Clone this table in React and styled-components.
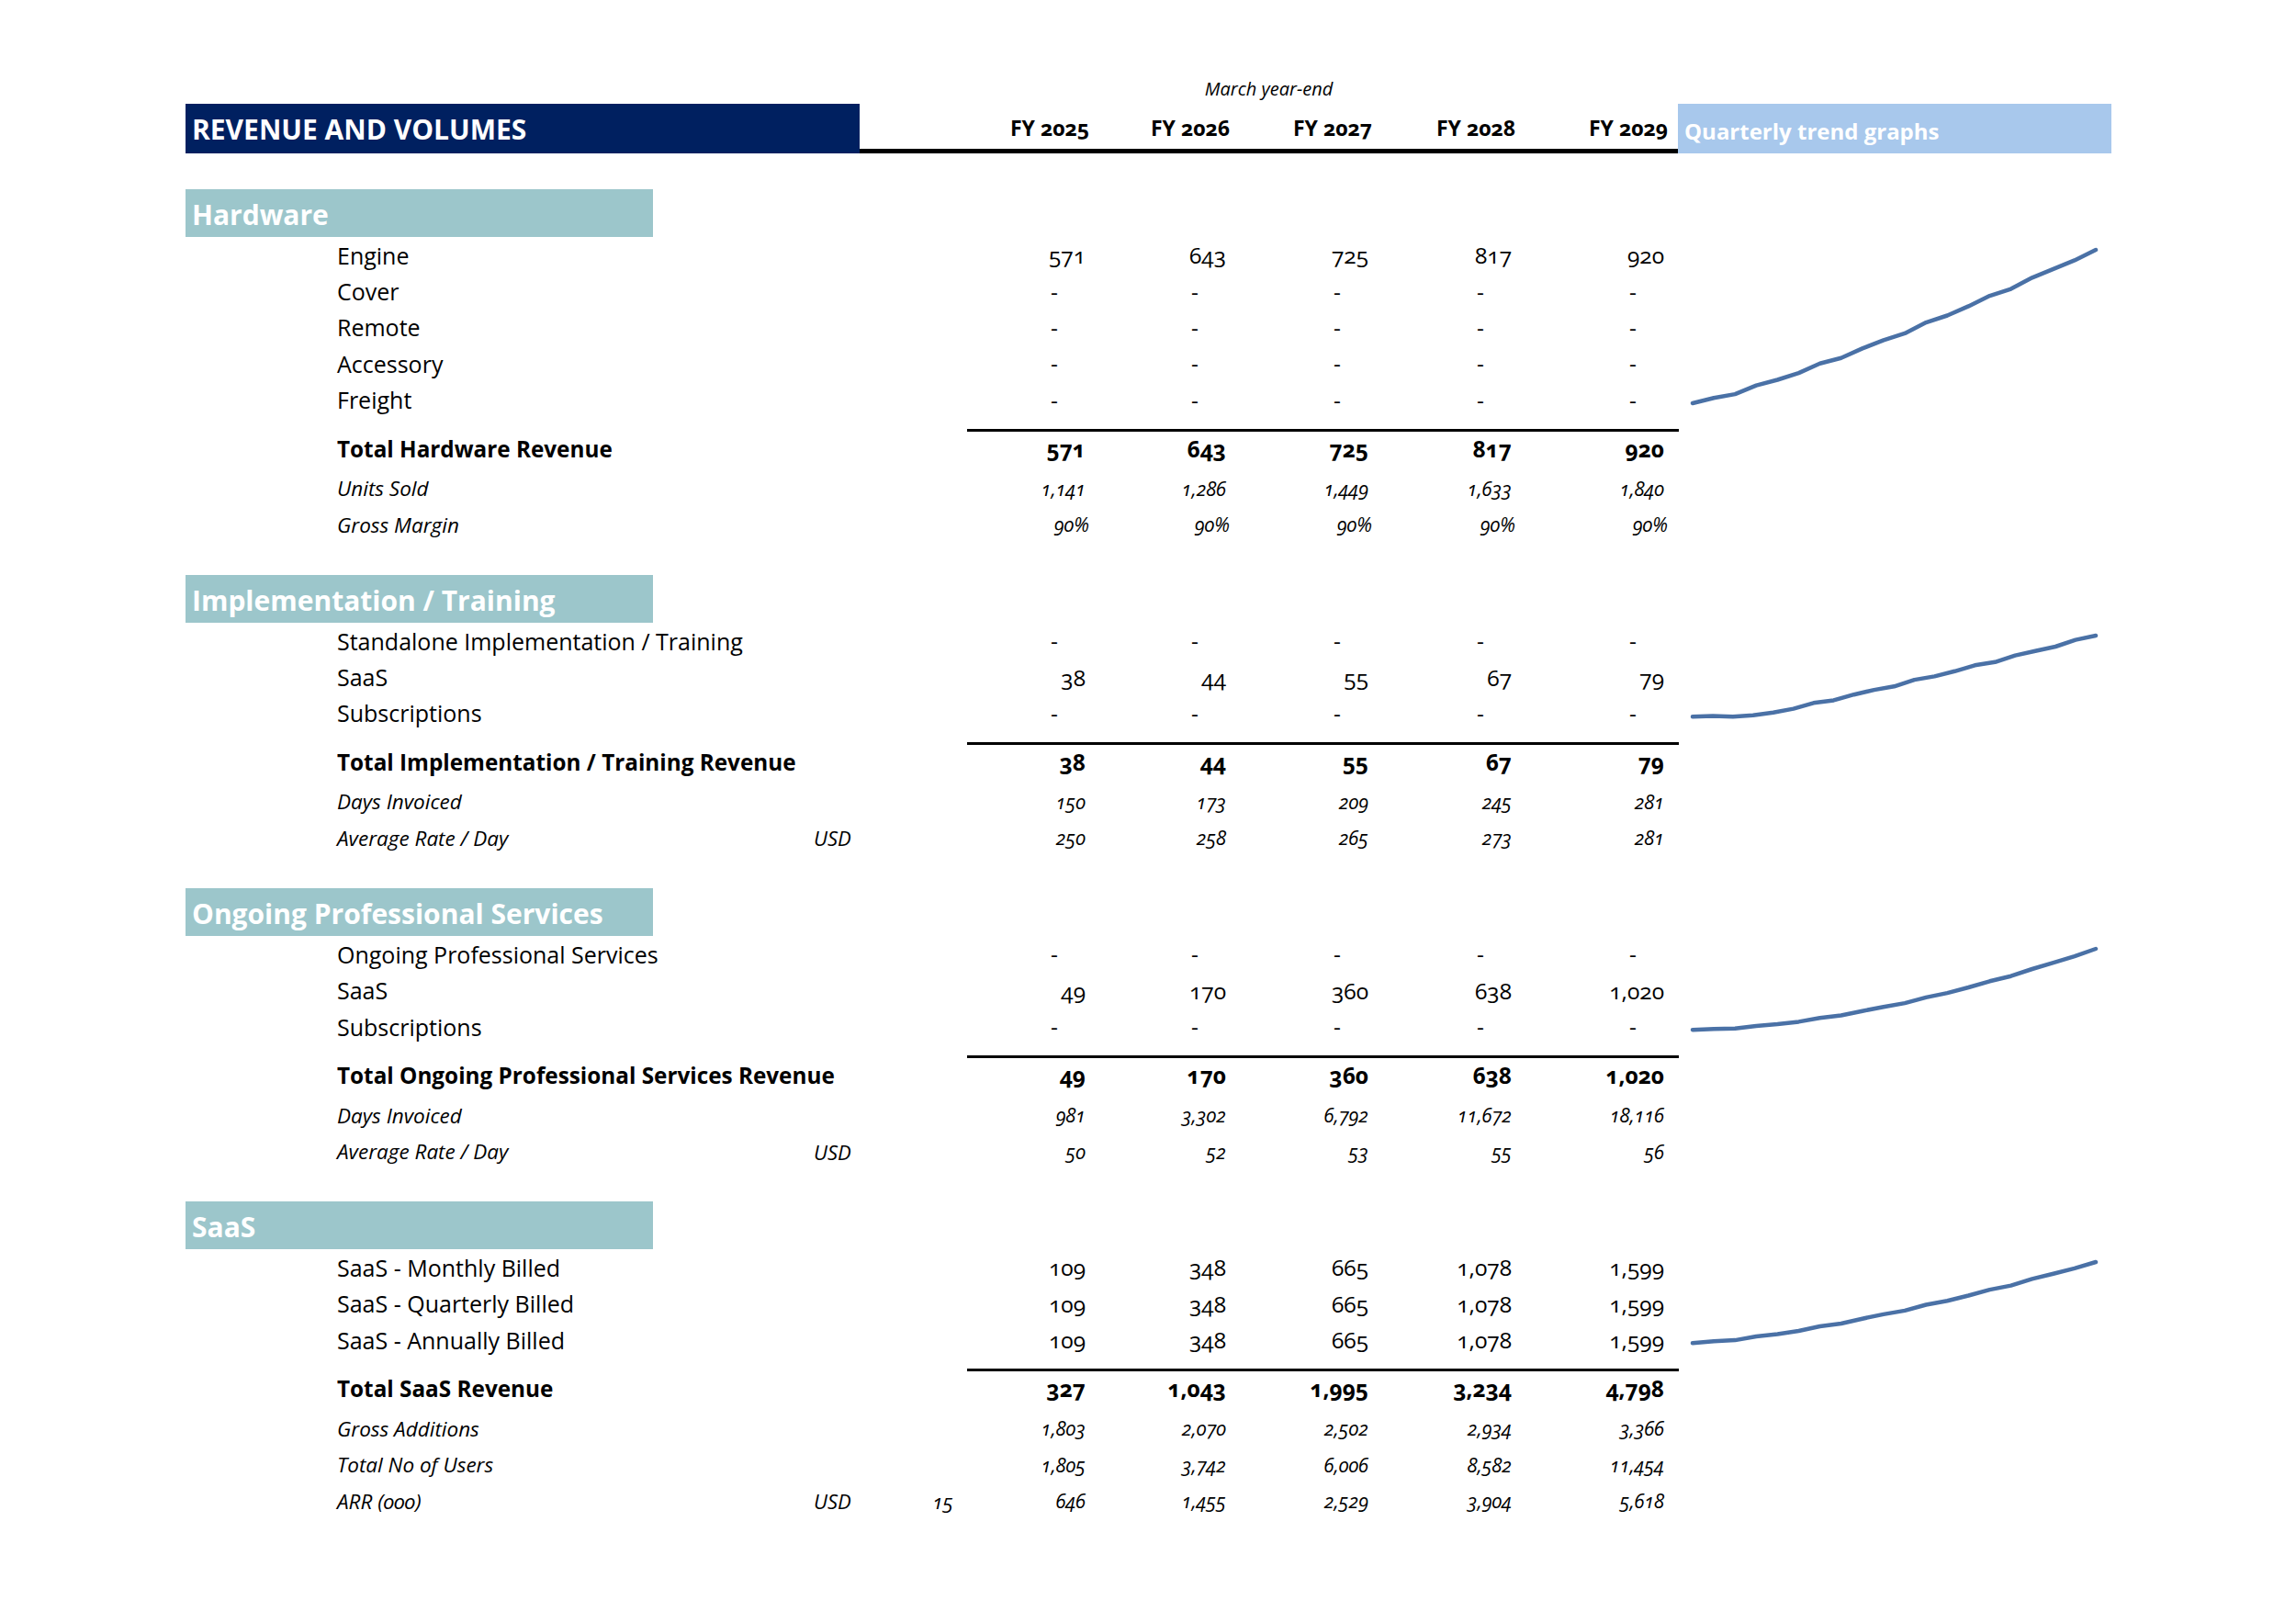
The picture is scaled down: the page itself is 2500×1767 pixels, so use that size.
import React from 'react';
import styled, { createGlobalStyle } from 'styled-components';

const GlobalStyle = createGlobalStyle`
  body {
    margin: 0;
    background: #ffffff;
    font-family: "Open Sans", "Liberation Sans", sans-serif;
    color: #000000;
  }
`;

const NUM_COLS = '133px 153px 155px 156px 166px 11px';
const ROW_COLS = `165px 519px 60px 92px 15px ${NUM_COLS}`;

const Page = styled.div`
  width: 2500px;
  min-height: 1767px;
  padding: 80px 0 0 202px;
  box-sizing: border-box;
  font-variant-numeric: oldstyle-nums;
`;

const TopGrid = styled.div`
  display: grid;
  grid-template-columns: 734px 891px 472px;
`;

const Note = styled.div`
  grid-column: 2;
  height: 33px;
  line-height: 33px;
  text-align: center;
  font-size: 20px;
  font-style: italic;
`;

const TitleBand = styled.div`
  height: 54px;
  background: #002060;
  color: #ffffff;
  font-size: 30px;
  font-weight: 700;
  line-height: 56px;
  padding-left: 7px;
`;

const YearBar = styled.div`
  height: 54px;
  box-sizing: border-box;
  border-bottom: 5px solid #000000;
  display: grid;
  grid-template-columns: 117px ${NUM_COLS};
  align-items: center;
`;

const Year = styled.div`
  font-size: 23px;
  font-weight: 700;
  text-align: right;
  white-space: nowrap;
  padding-top: 2px;
`;

const TrendBand = styled.div`
  height: 54px;
  background: #a8c8ec;
  color: #ffffff;
  font-size: 24px;
  font-weight: 700;
  line-height: 60px;
  padding-left: 7px;
`;

const Section = styled.section`
  margin-top: ${(p) => (p.$first ? '39px' : '35px')};
`;

const SectionBand = styled.div`
  width: 509px;
  height: 52px;
  box-sizing: border-box;
  background: #9cc6cb;
  color: #ffffff;
  font-size: 30px;
  font-weight: 700;
  line-height: 56px;
  padding-left: 7px;
  white-space: nowrap;
`;

const Body = styled.div`
  display: grid;
  grid-template-columns: 1625px 472px;
  align-items: start;
`;

const Rows = styled.div`
  display: flex;
  flex-direction: column;
`;

const Row = styled.div`
  display: grid;
  grid-template-columns: ${ROW_COLS};
  align-items: center;
  height: ${(p) => p.$h}px;
  font-size: ${(p) => (p.$sub ? '22.5px' : '25px')};
  font-style: ${(p) => (p.$sub ? 'italic' : 'normal')};
  white-space: nowrap;
`;

const TotalRow = styled(Row)`
  align-items: start;
  line-height: 38px;
  font-weight: 700;
  font-size: 24.3px;
`;

const Label = styled.div`
  grid-column: 2;
`;

const Unit = styled.div`
  grid-column: 3;
  font-style: italic;
  font-size: 22px;
`;

const Extra = styled.div`
  grid-column: 4;
  text-align: right;
  font-size: 22px;
`;

const Num = styled.div`
  text-align: right;
  font-size: ${(p) => (p.$sub ? '21px' : '24.5px')};
  padding-right: ${(p) => (p.$dash ? 34 : p.$pct ? 0 : 4)}px;
`;

const Spacer = styled.div`
  height: 12px;
`;

const Rule = styled.div`
  margin-left: 851px;
  width: 775px;
  height: 3px;
  background: #000000;
`;

const ChartCell = styled.div`
  height: ${(p) => p.$h}px;
  box-sizing: border-box;
  padding: 12px 17px 14px 16px;
`;

const years = ['FY 2025', 'FY 2026', 'FY 2027', 'FY 2028', 'FY 2029'];
const D = ['-', '-', '-', '-', '-'];

const curve = (n, fn, amp) =>
  Array.from({ length: n }, (_, i) => {
    const t = i / (n - 1);
    const w = i === 0 || i === n - 1 ? 0 : amp * Math.sin(i * 2.4);
    return Math.min(1, Math.max(0, fn(t) + w));
  });

const sections = [
  {
    title: 'Hardware',
    items: [
      ['Engine', ['571', '643', '725', '817', '920']],
      ['Cover', D],
      ['Remote', D],
      ['Accessory', D],
      ['Freight', D],
    ],
    total: ['Total Hardware Revenue', ['571', '643', '725', '817', '920']],
    subs: [
      ['Units Sold', '', '', ['1,141', '1,286', '1,449', '1,633', '1,840']],
      ['Gross Margin', '', '', ['90%', '90%', '90%', '90%', '90%'], true],
    ],
    trend: curve(20, (t) => Math.pow(t, 1.2), 0.008),
  },
  {
    title: 'Implementation / Training',
    items: [
      ['Standalone Implementation / Training', D],
      ['SaaS', ['38', '44', '55', '67', '79']],
      ['Subscriptions', D],
    ],
    total: ['Total Implementation / Training Revenue', ['38', '44', '55', '67', '79']],
    subs: [
      ['Days Invoiced', '', '', ['150', '173', '209', '245', '281']],
      ['Average Rate / Day', 'USD', '', ['250', '258', '265', '273', '281']],
    ],
    trend: curve(21, (t) => (t < 0.14 ? 0 : Math.pow((t - 0.14) / 0.86, 1.1)), 0.012),
  },
  {
    title: 'Ongoing Professional Services',
    items: [
      ['Ongoing Professional Services', D],
      ['SaaS', ['49', '170', '360', '638', '1,020']],
      ['Subscriptions', D],
    ],
    total: ['Total Ongoing Professional Services Revenue', ['49', '170', '360', '638', '1,020']],
    subs: [
      ['Days Invoiced', '', '', ['981', '3,302', '6,792', '11,672', '18,116']],
      ['Average Rate / Day', 'USD', '', ['50', '52', '53', '55', '56']],
    ],
    trend: curve(20, (t) => Math.pow(t, 1.7), 0.006),
  },
  {
    title: 'SaaS',
    items: [
      ['SaaS - Monthly Billed', ['109', '348', '665', '1,078', '1,599']],
      ['SaaS - Quarterly Billed', ['109', '348', '665', '1,078', '1,599']],
      ['SaaS - Annually Billed', ['109', '348', '665', '1,078', '1,599']],
    ],
    total: ['Total SaaS Revenue', ['327', '1,043', '1,995', '3,234', '4,798']],
    subs: [
      ['Gross Additions', '', '', ['1,803', '2,070', '2,502', '2,934', '3,366']],
      ['Total No of Users', '', '', ['1,805', '3,742', '6,006', '8,582', '11,454']],
      ['ARR (000)', 'USD', '15', ['646', '1,455', '2,529', '3,904', '5,618']],
    ],
    trend: curve(20, (t) => Math.pow(t, 1.4), 0.008),
  },
];

const ITEM_H = 39.4;

const Sparkline = ({ values, width, height }) => {
  const pts = values
    .map((v, i) => {
      const x = (i / (values.length - 1)) * width;
      const y = 2 + (1 - v) * (height - 4);
      return `${x.toFixed(1)},${y.toFixed(1)}`;
    })
    .join(' ');
  return (
    <svg width={width} height={height} style={{ display: 'block', overflow: 'visible' }}>
      <polyline
        points={pts}
        fill="none"
        stroke="#4a71a6"
        strokeWidth="4.5"
        strokeLinecap="round"
        strokeLinejoin="round"
      />
    </svg>
  );
};

const Values = ({ values, pct, sub }) =>
  values.map((v, i) => (
    <Num key={i} $dash={v === '-'} $pct={pct} $sub={sub}>
      {v}
    </Num>
  ));

const Block = ({ data, first }) => {
  const itemsH = data.items.length * ITEM_H;
  return (
    <Section $first={first}>
      <SectionBand>{data.title}</SectionBand>
      <Body>
        <Rows>
          {data.items.map(([label, vals]) => (
            <Row key={label} $h={ITEM_H}>
              <Label>{label}</Label>
              <div />
              <div />
              <div />
              <Values values={vals} />
            </Row>
          ))}
          <Spacer />
          <Rule />
          <TotalRow $h={42}>
            <Label>{data.total[0]}</Label>
            <div />
            <div />
            <div />
            <Values values={data.total[1]} />
          </TotalRow>
          {data.subs.map(([label, unit, extra, vals, pct]) => (
            <Row key={label} $h={39.5} $sub>
              <Label>{label}</Label>
              <Unit>{unit}</Unit>
              <Extra>{extra}</Extra>
              <div />
              <Values values={vals} pct={pct} sub />
            </Row>
          ))}
        </Rows>
        <ChartCell $h={itemsH}>
          <Sparkline values={data.trend} width={439} height={itemsH - 26} />
        </ChartCell>
      </Body>
    </Section>
  );
};

const App = () => (
  <>
    <GlobalStyle />
    <Page>
      <TopGrid>
        <Note>March year-end</Note>
      </TopGrid>
      <TopGrid>
        <TitleBand>REVENUE AND VOLUMES</TitleBand>
        <YearBar>
          <div />
          {years.map((y) => (
            <Year key={y}>{y}</Year>
          ))}
        </YearBar>
        <TrendBand>Quarterly trend graphs</TrendBand>
      </TopGrid>
      {sections.map((s, i) => (
        <Block key={s.title} data={s} first={i === 0} />
      ))}
    </Page>
  </>
);

export default App;
